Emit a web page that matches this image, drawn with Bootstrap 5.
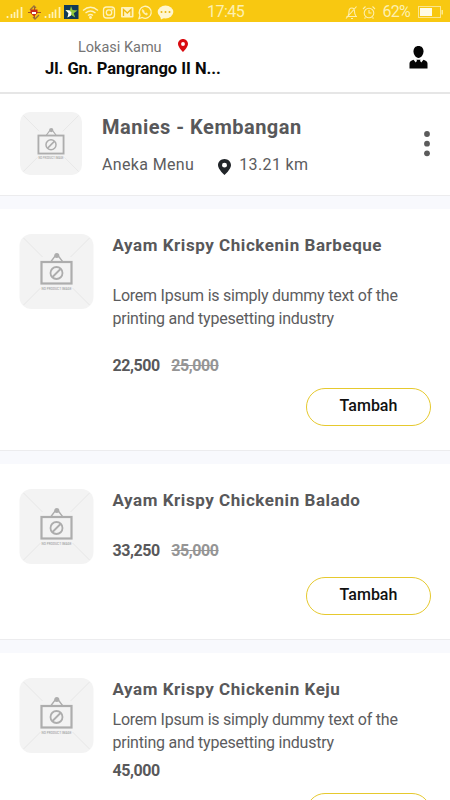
<!DOCTYPE html>
<html lang="id">
<head>
<meta charset="utf-8">
<meta name="viewport" content="width=device-width, initial-scale=1">
<title>Manies - Kembangan</title>
<link href="https://cdn.jsdelivr.net/npm/bootstrap@5.3.0/dist/css/bootstrap.min.css" rel="stylesheet">
<style>
body{font-family:Roboto,"Liberation Sans",sans-serif;font-size:16px;color:#58585a;background:#fff}
svg{display:block;flex:none}
.screen{width:450px;height:800px;background:#f8f9fd}
.statusbar{height:22px;background:#f8c811;color:#fdf0b0;font-size:16px;line-height:22px;padding:1px 7px 0 6px}
.clock{width:37px;margin-left:33px;white-space:nowrap;letter-spacing:-.5px}
.pct{letter-spacing:-.7px;margin-left:5px}
.topbar{height:72px;border-bottom:2px solid #e6e6e6;padding:15px 22px 0 45px}
.loc-label{font-size:14.5px;line-height:21px;color:#757575;padding-left:33px;gap:16px}
.loc-pin{color:#d90b10;margin-top:2px}
.loc-name{font-size:16.5px;line-height:22px;font-weight:700;letter-spacing:-.02px;color:#0a0a0a;white-space:nowrap}
.store{height:102px;border-bottom:1px solid #ececee;padding:18px 19px 0 20px}
.store-name{font-size:20px;font-weight:700;line-height:24px;letter-spacing:.5px;margin-top:3px;white-space:nowrap}
.store-meta{font-size:16px;line-height:22px;letter-spacing:.36px;margin-top:15px;color:#5c5c5e}
.item{margin-top:13px;border-bottom:1px solid #ececee;padding:25px 19px 24px 19px;gap:18.5px}
.item-name{font-size:17px;line-height:22px;padding-bottom:2px;font-weight:700;letter-spacing:.55px;white-space:nowrap}
.item-text{font-size:16px;line-height:23px;letter-spacing:-.23px;white-space:nowrap;color:#5c5c5e}
.item-price{font-size:16px;line-height:24px;font-weight:700;letter-spacing:-.43px;gap:11.5px}
.item-price s{color:#959595}
.btn-add{width:125px;height:38px;border:1.4px solid #e6c92e;border-radius:19px;font-size:16px;font-weight:500;color:#111;line-height:20px;padding:6px 0 8px;background:#fff}
.g1{margin-top:26px}.g2{margin-top:24px}.g3{margin-top:10px}
.g4{margin-top:26px}.g5{margin-top:14px}.g6{margin-top:6px}.g7{margin-top:5px}
</style>
<script src="https://cdn.jsdelivr.net/npm/bootstrap@5.3.0/dist/js/bootstrap.bundle.min.js"></script>
</head>
<body>
<svg width="0" height="0" class="position-absolute" aria-hidden="true">
  <symbol id="noimg" viewBox="0 0 74 75">
    <rect width="74" height="75" rx="12" fill="#f3f3f3"/>
    <path d="M4 4L23 23M70 4L51 23M4 71L21 54M70 71L53 54" stroke="#e2e2e2" stroke-width=".8"/>
    <path d="M31.5 27.5L36 21.5h2.5L43 27.5" fill="none" stroke="#adadad" stroke-width="1.3"/>
    <circle cx="37.3" cy="21.5" r="2.500" fill="#adadad"/>
    <rect x="22" y="28" width="30" height="21.5" fill="none" stroke="#adadad" stroke-width="2.200"/>
    <circle cx="37" cy="39" r="6" fill="none" stroke="#adadad" stroke-width="1.8"/>
    <path d="M33 43L41 35" stroke="#adadad" stroke-width="1.8"/>
    <text x="37" y="55.5" text-anchor="middle" textLength="30" font-family="Roboto" font-size="3.100" font-weight="500" fill="#a5a5a5">NO PRODUCT IMAGE</text>
  </symbol>
  <symbol id="pin" viewBox="0 0 14 18" preserveAspectRatio="none">
    <path fill-rule="evenodd" d="M7 0C3.100 0 0 3.100 0 7c0 4.500 7 11 7 11s7-6.500 7-11c0-3.900-3.100-7-7-7zm0 9.600a2.700 2.700 0 1 1 0-5.400 2.700 2.700 0 0 1 0 5.400z" fill="currentColor"/>
  </symbol>
  <symbol id="bars" viewBox="0 0 17 13">
    <path d="M1.500 10v2M5.500 8v4M8.500 6v6M11.500 3.500V12M15.500 1v11" stroke="#fff3b8" stroke-width="1.700"/>
  </symbol>
</svg>

<main class="screen overflow-hidden">
  <div class="statusbar d-flex align-items-center">
    <svg width="168" height="22" viewBox="6 0 168 22" fill="none" stroke="#fff3bd" stroke-width="1.300">
      <use href="#bars" x="6" y="5" width="17" height="13"/>
      <path d="M28 11.500h13M34.500 5v13" stroke="#a05a28" stroke-width="1"/>
      <path d="M30 9l4-4 2 2M39 14l-4 4-2-2" stroke="#96703c"/>
      <path d="M30.500 8.500h7v3.500l-3.500 3.500-3.500-3.500z" fill="#c92d1c" stroke="none"/>
      <path d="M32 11h4v2h-4z" fill="#fff" stroke="none"/>
      <use href="#bars" x="44" y="5" width="17" height="13"/>
      <path d="M64 4h14.500v14H64z" fill="#123a58" stroke="none"/>
      <path d="M71 5l1.500 4 5 .5-3.800 2.700 1.500 4.300-4-2.500-3.700 2.500 1-4.200L65.500 9l4.500.2z" fill="#92c83e" stroke="none"/>
      <path d="M65.500 9l4 .5 2 2-.5 3-3.500 2 1-4.200z" fill="#fff" stroke="none"/>
      <path d="M83 9.500q7.500-6.500 15 0M85.500 12q5-4 10 0M88 14.500q2.500-2 5 0"/><circle cx="90.500" cy="16.500" r=".8"/>
      <rect x="103.500" y="6" width="11" height="11" rx="3"/><circle cx="109" cy="11.500" r="2.700"/><circle cx="112.200" cy="8.500" r=".3"/>
      <rect x="121" y="6" width="12.500" height="10.500" rx="1" fill="#fff3bd" stroke="none"/>
      <path d="M123.500 15V8.500l3.800 3.500 3.700-3.500V15" stroke="#f0b90c"/>
      <path d="M139 17.500l1-3.300a6 6 0 1 1 2.300 2.300z"/><path d="M142.500 8.500q-.7 1 .5 3 1.500 2 3.500 2.500l1.200-1-1.600-1.200-.8.600-1.500-1.500.5-1z" fill="#fff3bd" stroke-width=".6"/>
      <ellipse cx="165.500" cy="11" rx="7.800" ry="6.500" fill="#fff6cf" stroke="none"/><path d="M160 14.500l1 4 4-2z" fill="#fff6cf" stroke="none"/>
      <g fill="#e8b414" stroke="none"><circle cx="161.500" cy="11" r="1"/><circle cx="165.500" cy="11" r="1"/><circle cx="169.500" cy="11" r="1"/></g>
    </svg>
    <span class="clock">17:45</span>
    <svg class="ms-auto" width="32" height="22" viewBox="348 0 32 22" fill="none" stroke="#fdeeae" stroke-width="1.100">
      <path d="M349.500 15.500h10.500M351 15q1-1.500 1-4.500 0-3.500 2.800-3.500 2.700 0 2.700 3.500 0 3 1.500 4.500M354 17.500h2M349 17.500L359.500 5.500"/>
      <circle cx="372" cy="12" r="4.800"/><path d="M372 9v3h2.500M366 8l2.500-2.500M378 8l-2.500-2.500M368.500 16.500l-1 1M375.500 16.500l1 1"/>
    </svg>
    <span class="pct">62%</span>
    <svg class="ms-2" width="25" height="22" viewBox="418 0 25 22" fill="none">
      <rect x="418.500" y="5.500" width="22" height="11" stroke="#fbe58e"/><rect x="420" y="7" width="12" height="8" fill="#fffbe6"/><path d="M442.200 9v4.500" stroke="#fdf0a8" stroke-width="1.300"/>
    </svg>
  </div>

  <header class="topbar bg-white d-flex justify-content-between">
    <div>
      <div class="loc-label d-flex"><span>Lokasi Kamu</span>
        <svg width="10" height="13" class="loc-pin"><use href="#pin" width="10" height="13"/></svg>
      </div>
      <div class="loc-name">Jl. Gn. Pangrango II N...</div>
    </div>
    <svg class="mt-2" width="19" height="24" viewBox="0 0 19 24" fill="#050505">
      <path d="M9.500 1c3.200 0 5 2.200 5 5.300 0 3.300-2.200 6.700-5 6.700s-5-3.400-5-6.700C4.500 3.200 6.300 1 9.500 1z"/>
      <path d="M.5 23.500v-5c0-1.800 1.500-3 4-3.800L6.800 17.500l1.200-1.700-.7-1h4.400l-.7 1 1.200 1.700 2.300-2.800c2.500.8 4 2 4 3.800v5z"/>
    </svg>
  </header>

  <section class="store bg-white d-flex">
    <svg width="62" height="63"><use href="#noimg" width="62" height="63"/></svg>
    <div class="flex-grow-1 ps-1 ms-3">
      <div class="store-name">Manies - Kembangan</div>
      <div class="store-meta d-flex align-items-center">
        <span>Aneka Menu</span>
        <svg class="ms-4 text-dark mt-1" width="13" height="17"><use href="#pin" width="13" height="16"/></svg>
        <span class="ms-1 ps-1">13.21 km</span>
      </div>
    </div>
    <svg class="mt-3" width="8" height="30" viewBox="0 0 8 30" fill="#5b5b5b"><circle cx="4" cy="6" r="2.900"/><circle cx="4" cy="15.700" r="2.900"/><circle cx="4" cy="25.300" r="2.900"/></svg>
  </section>

  <article class="item bg-white d-flex">
    <svg width="75" height="75"><use href="#noimg" width="75" height="75"/></svg>
    <div class="flex-grow-1 d-flex flex-column">
      <div class="item-name">Ayam Krispy Chickenin Barbeque</div>
      <div class="item-text g1">Lorem Ipsum is simply dummy text of the<br>printing and typesetting industry</div>
      <div class="item-price d-flex g2"><span>22,500</span><s>25,000</s></div>
      <button class="btn btn-add align-self-end g3">Tambah</button>
    </div>
  </article>

  <article class="item bg-white d-flex">
    <svg width="75" height="75"><use href="#noimg" width="75" height="75"/></svg>
    <div class="flex-grow-1 d-flex flex-column">
      <div class="item-name">Ayam Krispy Chickenin Balado</div>
      <div class="item-price d-flex g4"><span>33,250</span><s>35,000</s></div>
      <button class="btn btn-add align-self-end g5">Tambah</button>
    </div>
  </article>

  <article class="item bg-white d-flex">
    <svg width="75" height="75"><use href="#noimg" width="75" height="75"/></svg>
    <div class="flex-grow-1 d-flex flex-column">
      <div class="item-name">Ayam Krispy Chickenin Keju</div>
      <div class="item-text g6">Lorem Ipsum is simply dummy text of the<br>printing and typesetting industry</div>
      <div class="item-price d-flex g7"><span>45,000</span></div>
      <button class="btn btn-add align-self-end g3">Tambah</button>
    </div>
  </article>
</main>
</body>
</html>
